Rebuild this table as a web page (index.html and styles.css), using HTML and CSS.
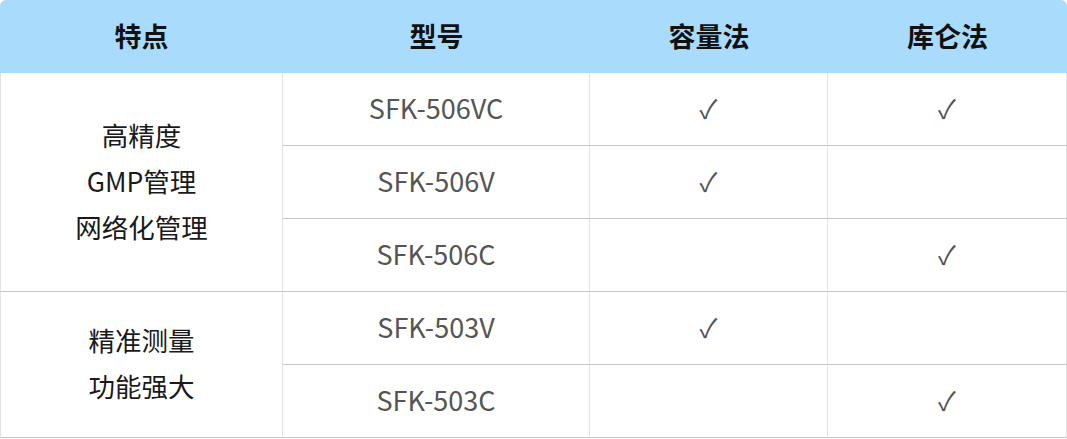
FILE: index.html
```html
<!DOCTYPE html>
<html lang="zh-CN">
<head>
<meta charset="utf-8">
<title>型号对比</title>
<link rel="stylesheet" href="styles.css">
</head>
<body>
<table class="spec">
  <colgroup>
    <col class="c1"><col class="c2"><col class="c3"><col class="c4">
  </colgroup>
  <thead>
    <tr><th>特点</th><th>型号</th><th>容量法</th><th>库仑法</th></tr>
  </thead>
  <tbody>
    <tr>
      <td class="feat" rowspan="3">高精度<br>GMP管理<br>网络化管理</td>
      <td class="model">SFK-506VC</td><td class="chk">✓</td><td class="chk">✓</td>
    </tr>
    <tr><td class="model">SFK-506V</td><td class="chk">✓</td><td class="chk"></td></tr>
    <tr class="grp-end"><td class="model">SFK-506C</td><td class="chk"></td><td class="chk">✓</td></tr>
    <tr>
      <td class="feat" rowspan="2">精准测量<br>功能强大</td>
      <td class="model">SFK-503V</td><td class="chk">✓</td><td class="chk"></td>
    </tr>
    <tr><td class="model">SFK-503C</td><td class="chk"></td><td class="chk">✓</td></tr>
  </tbody>
</table>
</body>
</html>
```
FILE: styles.css
```css
html, body {
  margin: 0;
  padding: 0;
  background: #fff;
}
.spec {
  width: 1067px;
  border-collapse: separate;
  border-spacing: 0;
  table-layout: fixed;
  font-family: "Noto Sans CJK SC", "Noto Sans", sans-serif;
  font-size: 27px;
}
.c1 { width: 283px; }
.c2 { width: 307px; }
.c3 { width: 238px; }
.c4 { width: 239px; }
.spec th {
  height: 71px;
  padding: 0 0 2px;
  background: #a9dbfd;
  color: #111;
  font-weight: 700;
  text-align: center;
  vertical-align: middle;
}
.spec th:first-child { border-top-left-radius: 6px; }
.spec th:last-child { border-top-right-radius: 6px; }
.spec td {
  height: 69px;
  padding: 0 0 3px;
  text-align: center;
  vertical-align: middle;
  border-bottom: 1px solid #c6c6c6;
  border-right: 1px solid #e2e2e2;
  color: #555;
}
.spec td.feat {
  border-left: 1px solid #e2e2e2;
  color: #1a1a1a;
  font-size: 26.5px;
  line-height: 46px;
}
.spec td.chk {
  color: #555;
  font-size: 26px;
}
```
